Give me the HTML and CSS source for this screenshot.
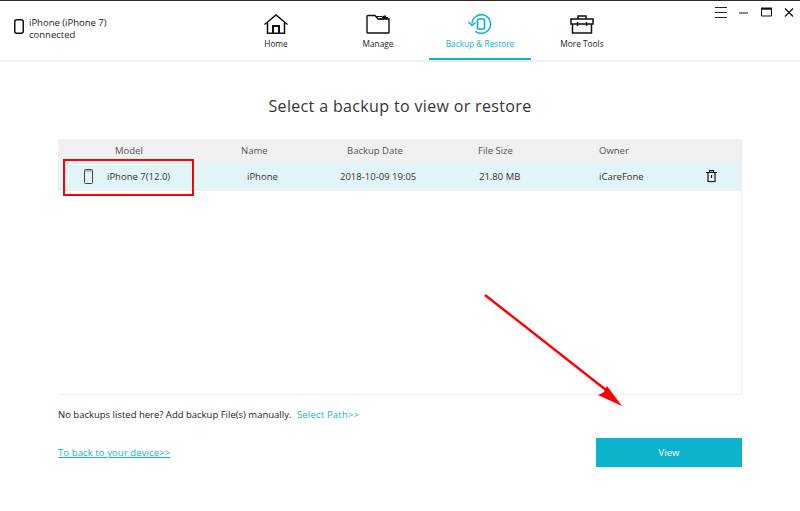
FILE: index.html
```html
<!DOCTYPE html>
<html lang="en">
<head>
<meta charset="utf-8">
<title>Backup &amp; Restore</title>
<link rel="stylesheet" href="styles.css">
</head>
<body>
<div class="app">
  <header class="topbar">
    <div class="device">
      <svg class="device-icon" width="10" height="15" viewBox="0 0 10 15"><rect x="0.750" y="0.750" width="8.500" height="13.500" rx="2" fill="none" stroke="#111" stroke-width="1.500"/></svg>
      <div class="device-text"><div>iPhone (iPhone 7)</div><div>connected</div></div>
    </div>
    <nav class="tabs">
      <a class="tab">
        <svg width="26" height="20" viewBox="0 0 26 20" fill="none" stroke="#111" stroke-width="1.500"><path d="M1.500 10.500 13 1l11.500 9.500"/><path d="M4.500 8.500v10.700h17V8.500"/><path d="M10 19v-7h6v7" stroke-width="2"/></svg>
        <span>Home</span>
      </a>
      <a class="tab">
        <svg width="26" height="20" viewBox="0 0 26 20" fill="none" stroke="#111" stroke-width="1.400"><path d="M2 18V2.500q0-1 1-1h7l3 3.500h11v13.200q0 .8-.8.8H2.800q-.8 0-.8-.8z"/><path d="M13 5h5l-1-2.500h-6" stroke-width="1.200"/><path d="M18 2v3h5V3h-2V1.500h-2z" fill="#111" stroke="none"/></svg>
        <span>Manage</span>
      </a>
      <a class="tab active">
        <svg width="26" height="20" viewBox="0 0 26 20" fill="none" stroke="#0fb3cd" stroke-width="1.500"><path d="M5 9.500a9.300 9.300 0 1 1 3.500 7.800"/><path d="M1.500 8l3.500 3.500L8.500 8.500"/><rect x="10.500" y="5" width="7" height="10" rx="1" stroke-width="1.700"/></svg>
        <span>Backup &amp; Restore</span>
      </a>
      <a class="tab">
        <svg width="26" height="20" viewBox="0 0 26 20" fill="none" stroke="#111" stroke-width="1.500"><path d="M9 5V2h8v3"/><path d="M2 5h22v5H2z"/><path d="M3.500 10v9h19v-9"/><path d="M8.500 8v4M17.500 8v4"/></svg>
        <span>More Tools</span>
      </a>
    </nav>
    <div class="winctl">
      <svg width="12" height="11" viewBox="0 0 12 11" stroke="#222"><path d="M0 .5h12M0 5.500h12M0 10.500h12"/></svg>
      <svg width="10" height="11" viewBox="0 0 10 11" stroke="#111"><path d="M0 6h9"/></svg>
      <svg width="11" height="11" viewBox="0 0 11 11" fill="none" stroke="#111"><path d="M.5 2h10v7H.5z"/><path d="M0 1.500h11" stroke-width="2"/></svg>
      <svg width="10" height="11" viewBox="0 0 10 11" stroke="#111" stroke-width="1.200"><path d="M1 1.500l8 8M9 1.500l-8 8"/></svg>
    </div>
  </header>
  <main class="content">
    <h1 class="title">Select a backup to view or restore</h1>
    <section class="table">
      <div class="row head">
        <div class="c-model">Model</div><div>Name</div><div>Backup Date</div><div>File Size</div><div>Owner</div>
      </div>
      <div class="row item">
        <div class="model-cell">
          <svg width="10" height="15" viewBox="0 0 10 15" fill="none" stroke="#444"><rect x="0.500" y="0.500" width="8" height="14" rx="1"/><path d="M1 2h7" stroke="#888"/></svg>
          <span>iPhone 7(12.0)</span>
        </div>
        <div>iPhone</div><div>2018-10-09 19:05</div><div>21.80 MB</div><div>iCareFone</div>
        <div class="c-del">
          <svg width="11" height="12" viewBox="0 0 11 12" fill="none" stroke="#111" stroke-width="1.200"><path d="M0 2.500h11M3.500 2V.7h4V2"/><path d="M2 2.500v9h7v-9"/><path d="M5.500 5v3"/></svg>
        </div>
      </div>
    </section>
    <p class="hint">No backups listed here? Add backup File(s) manually. <a class="select-path">Select Path&gt;&gt;</a></p>
    <div class="footer-row">
      <a class="back">To back to your device&gt;&gt;</a>
      <button class="view">View</button>
    </div>
  </main>
</div>
<div class="redbox"></div>
<svg class="arrow" width="150" height="120" viewBox="0 0 150 120"><path d="M1 1 L 122 96" stroke="#f00" stroke-width="2.400" fill="none"/><path d="M138 112 L 114 101 L 120 98 L 123 92z" fill="#f00"/></svg>
</body>
</html>
```
FILE: styles.css
```css
* { box-sizing: border-box; }
html, body { margin: 0; padding: 0; }
body { width: 800px; height: 511px; background: #fff; color: #222; font-family: "Open Sans", "Noto Sans", sans-serif; font-size: 9.500px; overflow: hidden; position: relative; }
.app { display: flex; flex-direction: column; height: 511px; border-top: 1px solid #2b2b2b; }
.topbar { display: flex; height: 61px; border-bottom: 2px solid #f0f0f0; position: relative; }
.device { width: 225px; display: flex; align-items: flex-start; gap: 5px; padding: 18px 0 0 14px; line-height: 12px; }
.device-text { margin-top: -2px; }
.tabs { display: flex; }
.tab { width: 102px; display: flex; flex-direction: column; align-items: center; padding-top: 13px; color: #222; height: 59px; gap: 3px; }
.tab span { font-size: 8.300px; line-height: 13px; white-space: nowrap; }
.tab.active { color: #0fb3cd; border-bottom: 2px solid #0bb4cc; }
.winctl { position: absolute; top: 6px; right: 6px; display: flex; gap: 12px; align-items: flex-start; }
.content { flex: 1; padding: 0 58px; }
.title { margin: 33px 0 0; font-size: 16px; font-weight: 400; text-align: center; line-height: 22px; letter-spacing: .35px; color: #333; }
.table { margin-top: 22px; height: 256px; border-right: 1px solid #eee; border-bottom: 1px solid #eee; }
.row { display: grid; align-items: center; }
.head { height: 23px; background: #f0f0f0; color: #555; grid-template-columns: 183px 106px 131px 121px 1fr; }
.c-model { padding-left: 57px; }
.item { height: 29px; background: #e3f4f9; border-bottom: 1px solid #eef2f3; color: #333; grid-template-columns: 189px 93px 139px 120px 107px 1fr; }
.model-cell { display: flex; align-items: center; gap: 13px; padding-left: 26px; }
.c-del { display: flex; }
.hint { margin: 13px 0 0; line-height: 13px; color: #222; }
.select-path { color: #0fb3cd; margin-left: 3px; letter-spacing: .2px; }
.footer-row { display: flex; justify-content: space-between; align-items: center; margin-top: 17px; }
.back { color: #0fb3cd; text-decoration: underline; letter-spacing: .1px; }
.view { width: 146px; height: 29px; background: #0bb4cc; border: 0; color: #fff; font: inherit; }
.redbox { position: absolute; left: 63px; top: 159px; width: 131px; height: 37px; border: 2px solid #f00; }
.arrow { position: absolute; left: 484px; top: 294px; }
```
